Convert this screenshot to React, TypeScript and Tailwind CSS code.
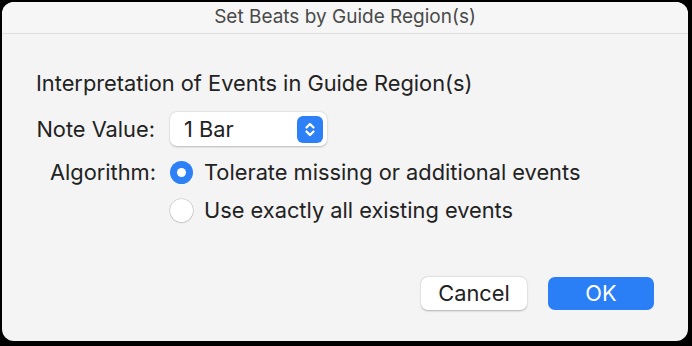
import React, { useState } from 'react';

const App: React.FC = () => {
  const [algo, setAlgo] = useState<'tolerate' | 'exact'>('tolerate');

  return (
    <div className="w-[692px] h-[346px] bg-black pt-[2px] pl-[2px] pb-[5px] pr-[4px]" style={{ fontFamily: 'Inter, "Noto Sans", sans-serif' }}>
      <div className="h-full w-full bg-[#f4f4f4] rounded-[12px] overflow-hidden flex flex-col">
        <div className="h-[32px] shrink-0 flex items-center justify-center border-b border-[#dedede] bg-[#f6f6f6] text-[19px] text-[#4a4a4a]">
          Set Beats by Guide Region(s)
        </div>

        <div className="flex-1 flex flex-col pl-[34px] pr-[34px] pt-[35px]">
          <div className="text-[21.8px] text-[#222] leading-[28px]">Interpretation of Events in Guide Region(s)</div>

          <div className="flex items-center mt-[15px]">
            <span className="text-[21.8px] text-[#222] w-[134px] text-right pr-[15px] whitespace-nowrap">Note Value:</span>
            <button className="flex items-center justify-between w-[157px] h-[34px] bg-white rounded-[7px] shadow-[0_0.5px_2px_rgba(0,0,0,0.25)] pl-[14px] pr-[4px]">
              <span className="text-[21.8px] text-[#222]">1 Bar</span>
              <span className="w-[26px] h-[27px] rounded-[6px] bg-[#2d80f6] flex items-center justify-center">
                <svg width="12" height="19" viewBox="0 0 12 19" fill="none" stroke="white" strokeWidth="2.3" strokeLinecap="round" strokeLinejoin="round">
                  <path d="M2.5 7.5 L6 4 L9.5 7.5" />
                  <path d="M2.5 11.5 L6 15 L9.5 11.5" />
                </svg>
              </span>
            </button>
          </div>

          <div className="flex mt-[15px]">
            <span className="text-[21.8px] text-[#222] w-[134px] text-right pr-[14px] leading-[23px] whitespace-nowrap">Algorithm:</span>
            <div className="flex flex-col gap-[15px]">
              {[
                { key: 'tolerate' as const, label: 'Tolerate missing or additional events' },
                { key: 'exact' as const, label: 'Use exactly all existing events' },
              ].map((o) => (
                <label key={o.key} className="flex items-center gap-[11px] cursor-pointer" onClick={() => setAlgo(o.key)}>
                  {algo === o.key ? (
                    <span className="w-[23px] h-[23px] rounded-full bg-[#2d80f6] flex items-center justify-center">
                      <span className="w-[9px] h-[9px] rounded-full bg-white" />
                    </span>
                  ) : (
                    <span className="w-[23px] h-[23px] rounded-full bg-white shadow-[0_0_0_0.5px_rgba(0,0,0,0.2),0_0.5px_1.5px_rgba(0,0,0,0.2)]" />
                  )}
                  <span className="text-[21.8px] text-[#222] leading-[23px] whitespace-nowrap">{o.label}</span>
                </label>
              ))}
            </div>
          </div>

          <div className="flex justify-end gap-[21px] mt-auto mb-[31px]">
            <button className="w-[106px] h-[33px] rounded-[7px] bg-white shadow-[0_0.5px_2px_rgba(0,0,0,0.28)] text-[21.8px] text-[#222]">
              Cancel
            </button>
            <button className="w-[106px] h-[33px] rounded-[7px] bg-[#2a7ff7] text-[21.8px] text-white">
              OK
            </button>
          </div>
        </div>
      </div>
    </div>
  );
};

export default App;
